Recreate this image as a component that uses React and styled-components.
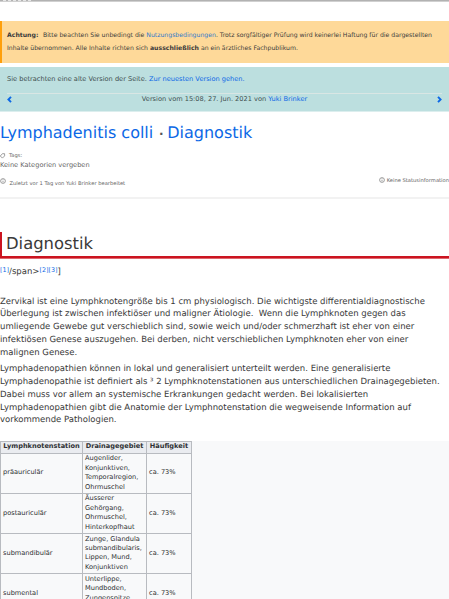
import React from 'react';
import styled, { createGlobalStyle } from 'styled-components';

const GlobalStyle = createGlobalStyle`
  * {
    box-sizing: border-box;
  }

  body {
    margin: 0;
    background: #fff;
    color: #3a3a3a;
    font-family: "DejaVu Sans", sans-serif;
    text-rendering: geometricPrecision;
    overflow: hidden;
  }
`;

//_______________________ Layout ______________________________

const Page = styled.div`
  width: 449px;
  height: 599px;
  overflow: hidden;
  display: flex;
  flex-direction: column;
  white-space: nowrap;
`;

const TopBar = styled.div`
  flex: none;
  height: 2px;
  background: linear-gradient(#b2b2b2 1px, #d0d0d0 1px);
  display: flex;
  padding-left: 3px;
`;

const TopBarTabs = styled.div`
  width: 28px;
  height: 1px;
  background: repeating-linear-gradient(90deg, #e6e6e6 0 3px, #b2b2b2 3px 5px);
`;

const Link = styled.a`
  color: ${({ $soft }) => ($soft ? '#2f78cc' : '#0c68e6')};
  text-decoration: none;
`;

//_______________________ Notices ______________________________

const Warning = styled.div`
  flex: none;
  margin-top: 19px;
  height: 42px;
  padding: 8px 0 0 5px;
  border-left: 2px solid #ff9f0a;
  background: #fed999;
  font-size: 6.16px;
  line-height: 13px;

  b:first-child {
    margin-right: 2.6px;
  }
`;

const VersionBox = styled.div`
  flex: none;
  margin-top: 4px;
  height: 45px;
  padding: 0 7px;
  background: #bcdfdf;
  border-bottom: 1px solid #dceeee;
  font-size: 6.62px;
  color: #3f4f50;
`;

const VersionNote = styled.div`
  height: 27px;
  line-height: 24px;
  border-bottom: 1px solid #d9e6e4;
`;

const VersionNav = styled.div`
  display: flex;
  justify-content: space-between;
  align-items: center;
  height: 10px;
`;

const Arrow = styled.svg`
  width: 5px;
  height: 7px;
  fill: none;
  stroke: #0c68e6;
  stroke-width: 1.9;
`;

//_______________________ Page head ______________________________

const Title = styled.h1`
  flex: none;
  margin: 9px 0 0;
  font-size: 16px;
  line-height: 24px;
  font-weight: 400;
  color: #555;
`;

const Dot = styled.span`
  display: inline-block;
  width: 14px;
  padding-left: 2px;
  text-align: center;
  font-size: 12px;
  font-weight: 700;
`;

const Meta = styled.div`
  flex: none;
  height: 47px;
  margin-top: 6px;
  border-bottom: 2px solid #f2f2f2;
  color: #666;
`;

const Tags = styled.div`
  display: flex;
  align-items: center;
  gap: 3px;
  height: 8px;
  font-size: 5.2px;
`;

const Category = styled.div`
  font-size: 6.62px;
  line-height: 10px;
`;

const MetaRow = styled.div`
  display: flex;
  justify-content: space-between;
  align-items: flex-start;
  margin-top: 8px;
  font-size: 5.2px;
  line-height: 8px;
`;

const MetaItem = styled.span`
  display: flex;
  gap: ${({ $gap }) => $gap}px;
  margin-top: ${({ $up }) => -($up || 0)}px;
`;

const MetaText = styled.span`
  padding-top: ${({ $drop }) => $drop || 0}px;
`;

const Icon = styled.svg`
  flex: none;
  width: 6px;
  height: 6px;
  fill: none;
  stroke: #777;
  stroke-width: 0.7;
`;

//_______________________ Article ______________________________

const Heading = styled.h2`
  flex: none;
  margin: 33px 0 0;
  height: 26px;
  padding-left: 4px;
  border-left: 2px solid #cb1420;
  border-bottom: 2px solid #cb1420;
  box-shadow: 0 1px #e0666e;
  font-size: 16.4px;
  line-height: 24px;
  font-weight: 400;
`;

const References = styled.div`
  flex: none;
  height: 19px;
  margin-top: 7px;
  font-size: 8.5px;
  line-height: 14px;

  sup {
    font-size: 6.4px;
    line-height: 0;
    vertical-align: 2.2px;
  }
`;

const Paragraph = styled.p`
  flex: none;
  margin: ${({ $top }) => $top}px 0 0;
  font-size: 8.5px;
  line-height: 12.75px;
`;

const TableArea = styled.div`
  flex: none;
  margin-top: 13.5px;
  height: 170px;
  background: #f8f9fa;
`;

const Table = styled.table`
  width: 191px;
  table-layout: fixed;
  border-collapse: collapse;
  color: #2f3133;
  font-size: 6.62px;
  line-height: 9.4px;

  th,
  td {
    border: 1px solid #b8bbc0;
    padding: 0 2px;
    text-align: left;
    vertical-align: middle;
  }

  th {
    height: 12px;
    background: #eaecf0;
    text-align: center;
  }

  td {
    height: 40.2px;
  }
`;

const rows = [
  ['präauriculär', ['Augenlider,', 'Konjunktiven,', 'Temporalregion,', 'Ohrmuschel']],
  ['postauriculär', ['Äusserer', 'Gehörgang,', 'Ohrmuschel,', 'Hinterkopfhaut']],
  ['submandibulär', ['Zunge, Glandula', 'submandibularis,', 'Lippen, Mund,', 'Konjunktiven']],
  ['submental', ['Unterlippe,', 'Mundboden,', 'Zungenspitze', '\u00a0']],
];

const InfoIcon = () => (
  <Icon viewBox="0 0 6 6">
    <circle cx="3" cy="3" r="2.4" />
    <path d="M3 2.7v1.7M3 1.4v.6" />
  </Icon>
);

const App = () => {
  return (
    <Page>
      <GlobalStyle />
      <TopBar>
        <TopBarTabs />
      </TopBar>

      <Warning>
        <b>Achtung:</b> Bitte beachten Sie unbedingt die <Link $soft>Nutzungsbedingungen</Link>. Trotz sorgfältiger Prüfung wird keinerlei Haftung für die dargestellten
        <br />
        Inhalte übernommen. Alle Inhalte richten sich <b>ausschließlich</b> an ein ärztliches Fachpublikum.
      </Warning>

      <VersionBox>
        <VersionNote>
          Sie betrachten eine alte Version der Seite. <Link>Zur neuesten Version gehen.</Link>
        </VersionNote>
        <VersionNav>
          <Arrow viewBox="0 0 5 7"><path d="M4 .8 1.4 3.5 4 6.2" /></Arrow>
          <span>Version vom 15:08, 27. Jun. 2021 von <Link>Yuki Brinker</Link></span>
          <Arrow viewBox="0 0 5 7"><path d="M1 .8 3.6 3.5 1 6.2" /></Arrow>
        </VersionNav>
      </VersionBox>

      <Title>
        <Link>Lymphadenitis colli</Link><Dot>·</Dot><Link>Diagnostik</Link>
      </Title>

      <Meta>
        <Tags>
          <Icon viewBox="0 0 6 6">
            <path d="M2.4 .7H4.6V2.9L2.4 5.1 .3 3z" />
          </Icon>
          Tags:
        </Tags>
        <Category>Keine Kategorien vergeben</Category>
        <MetaRow>
          <MetaItem $gap={3.5}>
            <InfoIcon />
            <MetaText $drop={2}>Zuletzt vor 1 Tag von Yuki Brinker bearbeitet</MetaText>
          </MetaItem>
          <MetaItem $gap={2} $up={1}>
            <InfoIcon />
            <MetaText>Keine Statusinformation</MetaText>
          </MetaItem>
        </MetaRow>
      </Meta>

      <Heading>Diagnostik</Heading>
      <References>
        <sup><Link>[1]</Link></sup>/span&gt;<sup><Link>[2][3]</Link></sup>]
      </References>

      <Paragraph $top={11.5}>
        Zervikal ist eine Lymphknotengröße bis 1 cm physiologisch. Die wichtigste differentialdiagnostische
        <br />
        Überlegung ist zwischen infektiöser und maligner Ätiologie.&nbsp; Wenn die Lymphknoten gegen das
        <br />
        umliegende Gewebe gut verschieblich sind, sowie weich und/oder schmerzhaft ist eher von einer
        <br />
        infektiösen Genese auszugehen. Bei derben, nicht verschieblichen Lymphknoten eher von einer
        <br />
        malignen Genese.
      </Paragraph>
      <Paragraph $top={4}>
        Lymphadenopathien können in lokal und generalisiert unterteilt werden. Eine generalisierte
        <br />
        Lymphadenopathie ist definiert als ³ 2 Lymphknotenstationen aus unterschiedlichen Drainagegebieten.
        <br />
        Dabei muss vor allem an systemische Erkrankungen gedacht werden. Bei lokalisierten
        <br />
        Lymphadenopathien gibt die Anatomie der Lymphnotenstation die wegweisende Information auf
        <br />
        vorkommende Pathologien.
      </Paragraph>

      <TableArea>
        <Table>
          <colgroup>
            <col width="82" />
            <col width="64" />
            <col width="45" />
          </colgroup>
          <thead>
            <tr>
              <th>Lymphknotenstation</th>
              <th>Drainagegebiet</th>
              <th>Häufigkeit</th>
            </tr>
          </thead>
          <tbody>
            {rows.map(([station, area]) => (
              <tr key={station}>
                <td>{station}</td>
                <td>
                  {area.map((line) => (
                    <div key={line}>{line}</div>
                  ))}
                </td>
                <td>ca. 73%</td>
              </tr>
            ))}
          </tbody>
        </Table>
      </TableArea>
    </Page>
  );
};

export default App;
